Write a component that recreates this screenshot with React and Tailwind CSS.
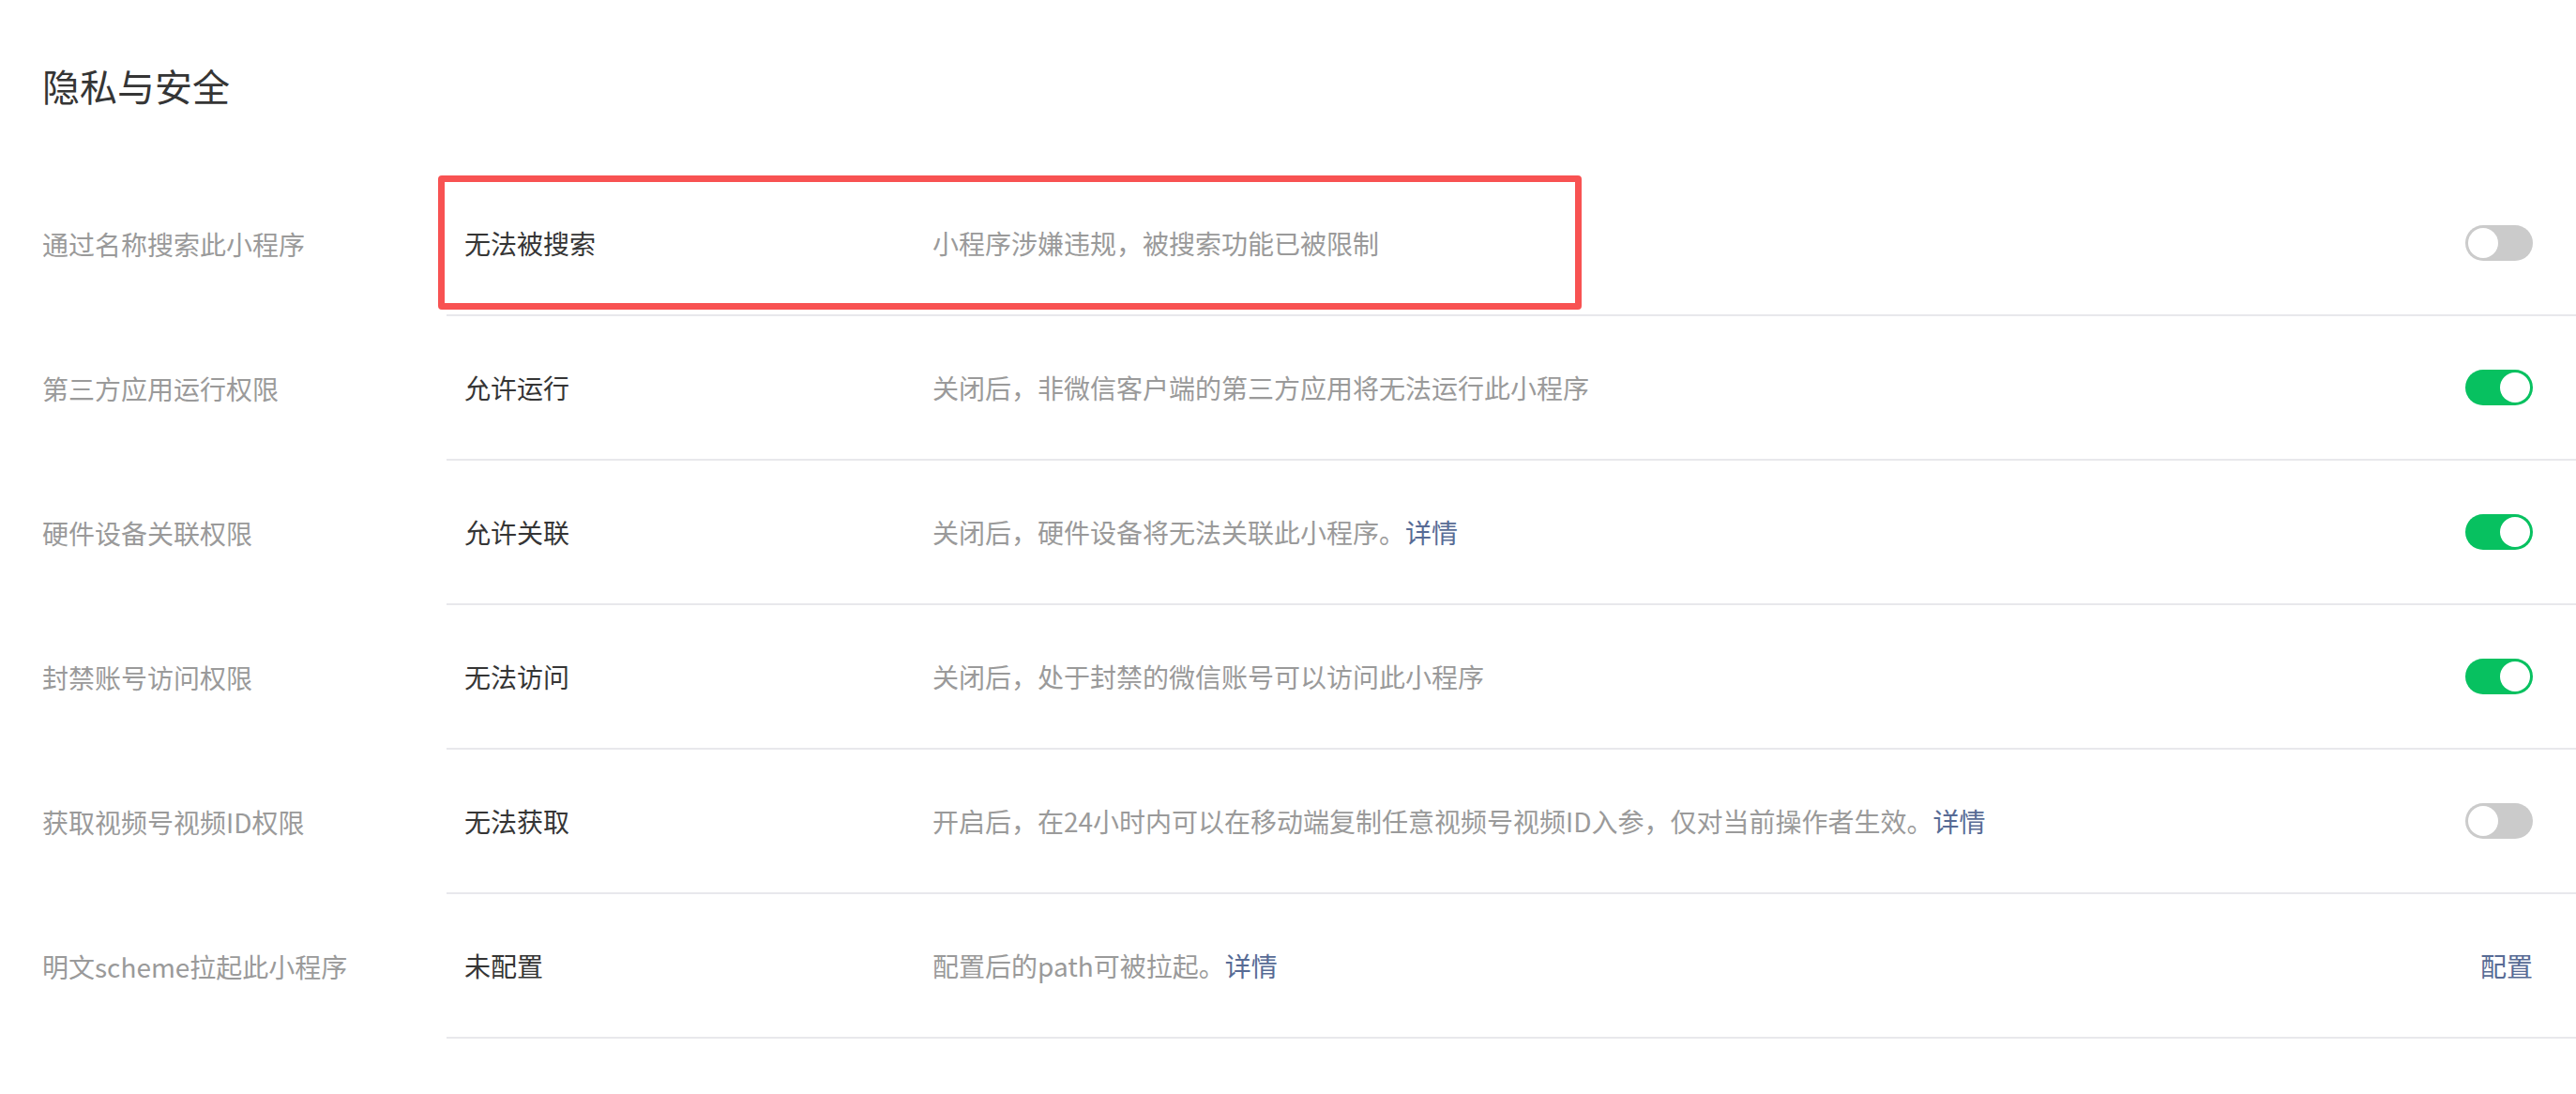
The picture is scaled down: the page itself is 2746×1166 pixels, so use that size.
import React, { useState } from "react";

const rows = [
  {
    label: "通过名称搜索此小程序",
    value: "无法被搜索",
    desc: "小程序涉嫌违规，被搜索功能已被限制",
    type: "switch",
    on: false,
    marked: true,
  },
  {
    label: "第三方应用运行权限",
    value: "允许运行",
    desc: "关闭后，非微信客户端的第三方应用将无法运行此小程序",
    type: "switch",
    on: true,
  },
  {
    label: "硬件设备关联权限",
    value: "允许关联",
    desc: "关闭后，硬件设备将无法关联此小程序。",
    link: "详情",
    type: "switch",
    on: true,
  },
  {
    label: "封禁账号访问权限",
    value: "无法访问",
    desc: "关闭后，处于封禁的微信账号可以访问此小程序",
    type: "switch",
    on: true,
  },
  {
    label: "获取视频号视频ID权限",
    value: "无法获取",
    desc: "开启后，在24小时内可以在移动端复制任意视频号视频ID入参，仅对当前操作者生效。",
    link: "详情",
    type: "switch",
    on: false,
  },
  {
    label: "明文scheme拉起此小程序",
    value: "未配置",
    desc: "配置后的path可被拉起。",
    link: "详情",
    type: "action",
    action: "配置",
  },
];

const Toggle = ({ on, onClick }) => (
  <button
    onClick={onClick}
    className={`flex h-[38px] w-[72px] items-center rounded-full p-[3px] ${
      on ? "justify-end bg-[#07c160]" : "justify-start bg-[#cbcbcb]"
    }`}
  >
    <span className="block h-[32px] w-[32px] rounded-full bg-white" />
  </button>
);

const App = () => {
  const [states, setStates] = useState(rows.map((r) => !!r.on));

  const flip = (i) =>
    setStates((prev) => prev.map((s, idx) => (idx === i ? !s : s)));

  return (
    <div
      className="min-h-screen bg-white pl-[45px]"
      style={{ fontFamily: '"Noto Sans CJK SC", "Noto Sans", sans-serif' }}
    >
      <h1 className="pt-[63px] pb-[64px] text-[40px] font-normal leading-[56px] text-[#353535]">
        隐私与安全
      </h1>

      <div>
        {rows.map((row, i) => (
          <div key={row.label} className="flex">
            <div className="flex w-[431px] shrink-0 items-center text-[28px] leading-[40px] text-[#9a9a9a]">
              {row.label}
            </div>
            <div className="relative flex h-[154px] flex-1 items-center border-b-2 border-[#e8e8ec] pr-[46px]">
              {row.marked && (
                <div className="pointer-events-none absolute left-[-9px] top-[4px] h-[143px] w-[1219px] rounded-[4px] border-[7px] border-[#f85252]" />
              )}
              <div className="w-[518px] shrink-0 pl-[19px] text-[28px] leading-[40px] text-[#353535]">
                {row.value}
              </div>
              <div className="flex-1 text-[28px] leading-[40px] text-[#9a9a9a]">
                {row.desc}
                {row.link && (
                  <a href="#" className="text-[#576b95]">
                    {row.link}
                  </a>
                )}
              </div>
              {row.type === "switch" ? (
                <Toggle on={states[i]} onClick={() => flip(i)} />
              ) : (
                <a href="#" className="text-[28px] leading-[40px] text-[#576b95]">
                  {row.action}
                </a>
              )}
            </div>
          </div>
        ))}
      </div>
    </div>
  );
};

export default App;
